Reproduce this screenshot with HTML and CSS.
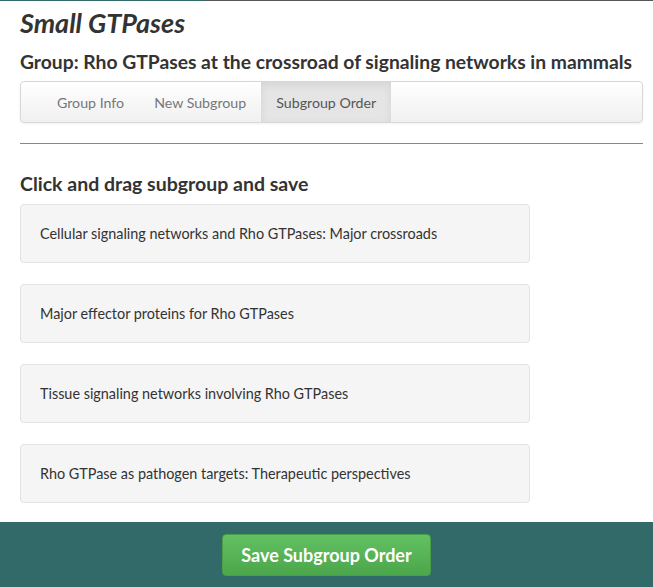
FILE: index.html
```html
<!DOCTYPE html>
<html>
<head>
<meta charset="utf-8">
<link rel="stylesheet" href="styles.css">
</head>
<body>
<div class="topline"></div>
<main class="page">
  <h1 class="title">Small GTPases</h1>
  <h2 class="group">Group: Rho GTPases at the crossroad of signaling networks in mammals</h2>
  <nav class="navbar">
    <a class="tab">Group Info</a>
    <a class="tab">New Subgroup</a>
    <a class="tab active">Subgroup Order</a>
  </nav>
  <hr class="rule">
  <h3 class="hint">Click and drag subgroup and save</h3>
  <ul class="list">
    <li class="item">Cellular signaling networks and Rho GTPases: Major crossroads</li>
    <li class="item">Major effector proteins for Rho GTPases</li>
    <li class="item">Tissue signaling networks involving Rho GTPases</li>
    <li class="item">Rho GTPase as pathogen targets: Therapeutic perspectives</li>
  </ul>
</main>
<footer class="footer">
  <button class="save">Save Subgroup Order</button>
</footer>
</body>
</html>
```
FILE: styles.css
```css
html, body {
  margin: 0;
  padding: 0;
  background: #fff;
  font-family: "Lato", "Open Sans", sans-serif;
  color: #333;
}
.topline {
  height: 1px;
  background: linear-gradient(to right, #336b6a 0, #336b6a 205px, #555 205px);
}
.page {
  padding: 0 10px 0 20px;
}
.title {
  margin: 7px 0 0;
  font-size: 27px;
  line-height: 29px;
  font-style: italic;
  font-weight: 700;
  color: #333;
}
.group {
  margin: 14px 0 0;
  font-size: 19.3px;
  line-height: 22px;
  font-weight: 700;
  color: #333;
}
.navbar {
  margin-top: 8px;
  height: 40px;
  display: flex;
  padding-left: 21px;
  border: 1px solid #d8d8d8;
  border-radius: 4px;
  background: linear-gradient(#ffffff, #f0f0f0);
  box-shadow: 0 1px 3px rgba(0,0,0,0.06);
}
.tab {
  display: flex;
  align-items: center;
  padding: 0 15px;
  font-size: 14.2px;
  color: #777;
}
.tab.active {
  background: #e5e5e5;
  color: #555;
  box-shadow: inset 0 3px 8px rgba(0,0,0,0.08);
}
.rule {
  margin: 20px 0 0;
  border: 0;
  border-top: 1px solid #888;
}
.hint {
  margin: 29px 0 0;
  font-size: 19.5px;
  line-height: 22px;
  font-weight: 700;
  color: #333;
}
.list {
  list-style: none;
  margin: 9px 0 0;
  padding: 0;
  display: flex;
  flex-direction: column;
  gap: 21px;
}
.item {
  width: 489px;
  height: 57px;
  padding: 0 0 0 19px;
  display: flex;
  align-items: center;
  background: #f5f5f5;
  border: 1px solid #e3e3e3;
  border-radius: 4px;
  font-size: 14.4px;
  color: #333;
}
.footer {
  margin-top: 19px;
  height: 65px;
  background: #326a69;
  display: flex;
  justify-content: center;
  align-items: flex-start;
  padding-top: 12px;
  box-sizing: border-box;
}
.save {
  width: 209px;
  height: 42px;
  border: 1px solid #4a9e48;
  border-radius: 4px;
  background: linear-gradient(#62c162, #4ca64b);
  color: #fff;
  font-family: inherit;
  font-size: 18px;
  font-weight: 700;
}
```
